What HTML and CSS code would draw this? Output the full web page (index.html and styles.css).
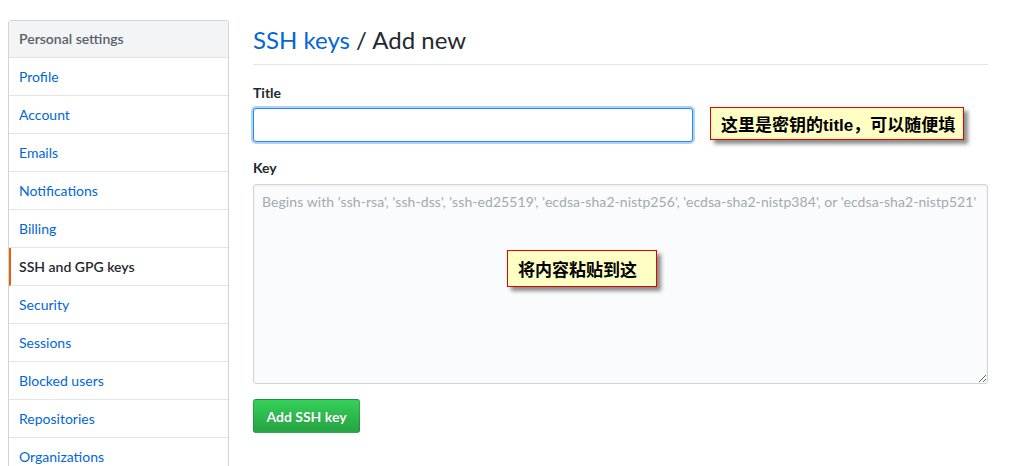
FILE: index.html
```html
<!DOCTYPE html>
<html lang="zh">
<head>
<meta charset="utf-8">
<link rel="stylesheet" href="styles.css">
</head>
<body>
<div class="page">
  <nav class="menu">
    <div class="menu-heading">Personal settings</div>
    <a class="menu-item">Profile</a>
    <a class="menu-item">Account</a>
    <a class="menu-item">Emails</a>
    <a class="menu-item">Notifications</a>
    <a class="menu-item">Billing</a>
    <a class="menu-item selected">SSH and GPG keys</a>
    <a class="menu-item">Security</a>
    <a class="menu-item">Sessions</a>
    <a class="menu-item">Blocked users</a>
    <a class="menu-item">Repositories</a>
    <a class="menu-item">Organizations</a>
  </nav>
  <main class="content">
    <h2 class="subhead"><a class="crumb">SSH keys</a> / Add new</h2>
    <form class="form">
      <label class="label">Title</label>
      <input class="input-title" type="text">
      <label class="label key-label">Key</label>
      <textarea class="input-key" placeholder="Begins with 'ssh-rsa', 'ssh-dss', 'ssh-ed25519', 'ecdsa-sha2-nistp256', 'ecdsa-sha2-nistp384', or 'ecdsa-sha2-nistp521'"></textarea>
      <div class="actions"><button class="btn-primary" type="button">Add SSH key</button></div>
    </form>
    <div class="note note-title">这里是密钥的title，可以随便填</div>
    <div class="note note-key">将内容粘贴到这</div>
  </main>
</div>
</body>
</html>
```
FILE: styles.css
```css
* { box-sizing: border-box; }
html, body { margin: 0; padding: 0; background: #fff; }
body {
  font-family: Lato, "Noto Sans", sans-serif;
  font-size: 14px;
  color: #24292e;
  overflow: hidden;
  height: 466px;
}
.page {
  display: flex;
  gap: 24px;
  padding: 20px 21px 0 8px;
}
.menu {
  width: 221px;
  flex: none;
  border: 1px solid #d1d5da;
  border-radius: 3px;
  display: flex;
  flex-direction: column;
  align-self: flex-start;
}
.menu-heading {
  background: #f3f4f6;
  color: #586069;
  font-weight: 600;
  padding: 8px 10px;
  line-height: 20px;
  height: 37px;
  border-bottom: 1px solid #e1e4e8;
  border-radius: 3px 3px 0 0;
}
.menu-item {
  display: block;
  color: #0366d6;
  padding: 8px 10px;
  line-height: 21px;
  height: 38px;
  border-bottom: 1px solid #e1e4e8;
}
.menu-item.selected {
  color: #24292e;
  font-weight: 600;
  border-left: 2px solid #e36209;
  padding-left: 8px;
}
.content {
  flex: 1;
  position: relative;
}
.subhead {
  margin: 0;
  font-size: 24px;
  font-weight: 400;
  line-height: 36px;
  padding: 2px 0 6px;
  border-bottom: 1px solid #e1e4e8;
  color: #24292e;
}
.crumb { color: #0366d6; }
.form { display: flex; flex-direction: column; align-items: flex-start; padding-top: 18px; }
.label {
  font-weight: 700;
  line-height: 20px;
  margin-bottom: 5px;
}
.input-title {
  width: 440px;
  height: 34px;
  border: 1px solid #2188ff;
  border-radius: 3px;
  box-shadow: 0 0 0 2px rgba(3, 102, 214, 0.3);
  outline: none;
  background: #fff;
  margin-bottom: 16px;
}
.key-label { margin-bottom: 6px; }
.input-key {
  width: 100%;
  height: 200px;
  background: #fafbfc;
  border: 1px solid #d1d5da;
  border-radius: 3px;
  box-shadow: inset 0 1px 2px rgba(27,31,35,0.075);
  padding: 7px 8px;
  font-family: inherit;
  font-size: 14px;
  letter-spacing: 0.07px;
  line-height: 20px;
  resize: vertical;
  white-space: nowrap;
}
.input-key::placeholder { color: #a3aab1; }
.actions { padding-top: 15px; }
.btn-primary {
  height: 34px;
  width: 107px;
  border: 1px solid rgba(27,31,35,0.2);
  border-radius: 3px;
  background: linear-gradient(#34d058, #28a745 90%);
  color: #fff;
  font-family: inherit;
  font-size: 14px;
  font-weight: 700;
  padding: 0;
  white-space: nowrap;
  text-shadow: 0 0 1px rgba(0,0,0,0.25);
}
.note {
  position: absolute;
  background: #ffffc4;
  border: 1px solid #e60000;
  box-shadow: 4px 4px 4px rgba(0,0,0,0.45);
  font-family: "Liberation Sans", "Noto Sans CJK SC", sans-serif;
  font-weight: 700;
  font-size: 17px;
  color: #000;
  padding: 0 10px;
  white-space: nowrap;
  display: flex;
  align-items: center;
}
.note-title { left: 457px; top: 87px; width: 254px; height: 33px; }
.note-key { left: 254px; top: 230px; width: 150px; height: 37px; }
```
